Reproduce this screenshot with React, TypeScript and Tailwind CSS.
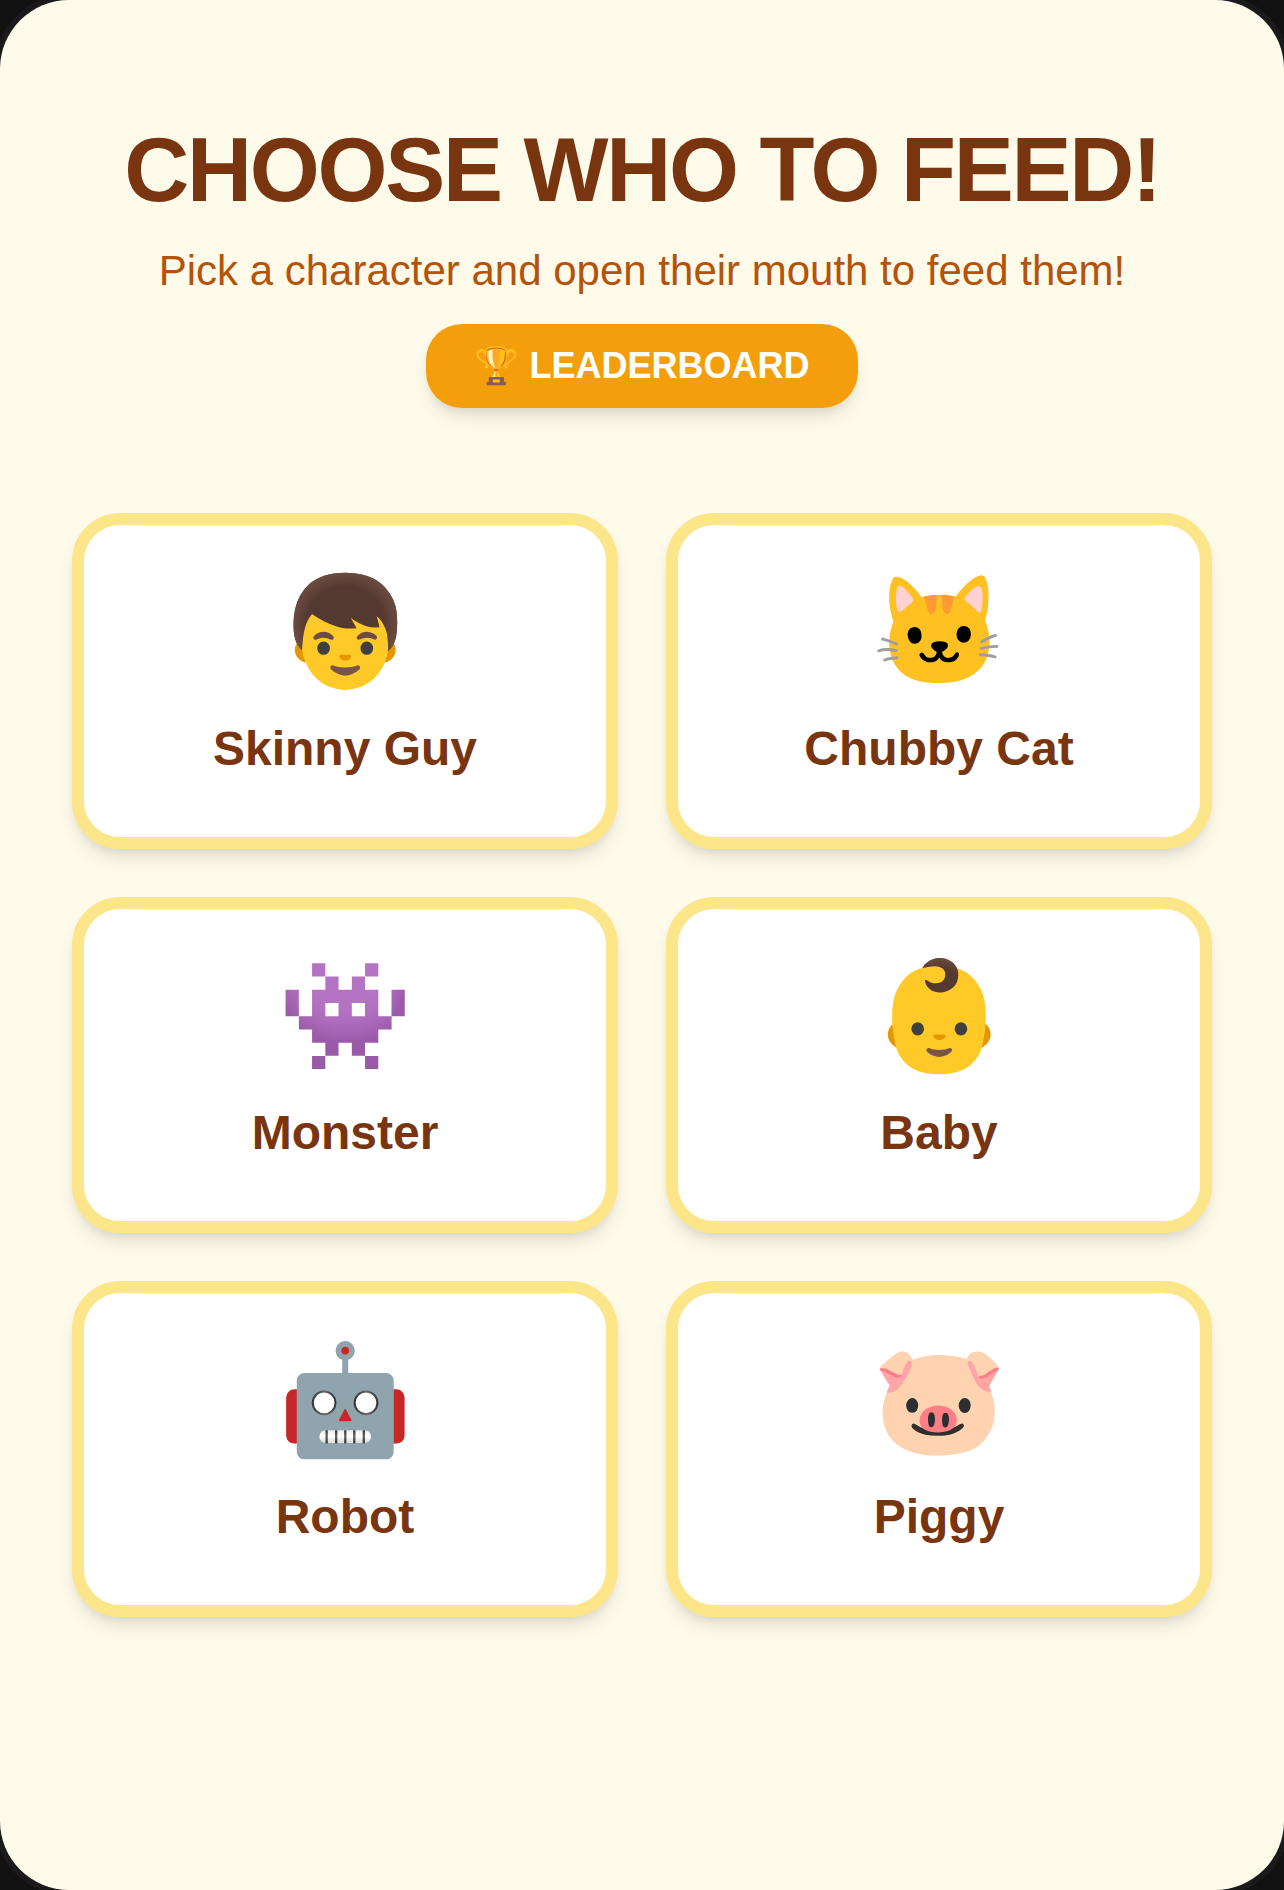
import React from 'react';

interface Character {
  id: string;
  name: string;
  emoji: string;
}

const characters: Character[] = [
  { id: 'skinny', name: 'Skinny Guy', emoji: '👦' },
  { id: 'cat', name: 'Chubby Cat', emoji: '🐱' },
  { id: 'monster', name: 'Monster', emoji: '👾' },
  { id: 'baby', name: 'Baby', emoji: '👶' },
  { id: 'robot', name: 'Robot', emoji: '🤖' },
  { id: 'pig', name: 'Piggy', emoji: '🐷' },
];

const CharacterCard = ({ character }: { character: Character }) => (
  <button
    type="button"
    className="flex h-[336px] flex-col items-center gap-4 rounded-[48px] border-12 border-[#fde68a] bg-white pt-9 shadow-[0_12px_18px_-3px_rgba(0,0,0,0.1),0_6px_12px_-6px_rgba(0,0,0,0.1)]"
  >
    <span className="text-[108px] leading-[142px]">{character.emoji}</span>
    <span className="text-[48px] leading-[60px] font-bold text-[#78350f]">{character.name}</span>
  </button>
);

export default function App() {
  return (
    <div className="min-h-screen bg-[#111111] font-['Liberation_Sans',Arial,sans-serif]">
      <main className="min-h-screen rounded-[69px] bg-[#fffbeb] px-[72px] pt-[118px] pb-[120px] shadow-[0_0_0_6px_#1a1a1a]">
        <header className="flex flex-col items-center text-center">
          <h1 className="text-[90px] leading-[105px] font-bold tracking-tight text-[#78350f]">
            CHOOSE WHO TO FEED!
          </h1>
          <p className="mt-6 text-[42px] leading-[48px] text-[#b45309]">
            Pick a character and open their mouth to feed them!
          </p>
          <button
            type="button"
            className="mt-[29px] h-[84px] rounded-[36px] bg-[#f59e0b] px-12 text-4xl font-bold text-white shadow-[0_12px_18px_-3px_rgba(0,0,0,0.1),0_6px_12px_-6px_rgba(0,0,0,0.1)]"
          >
            🏆 LEADERBOARD
          </button>
        </header>
        <section className="mt-[105px] grid grid-cols-2 gap-12">
          {characters.map((character) => (
            <CharacterCard key={character.id} character={character} />
          ))}
        </section>
      </main>
    </div>
  );
}
